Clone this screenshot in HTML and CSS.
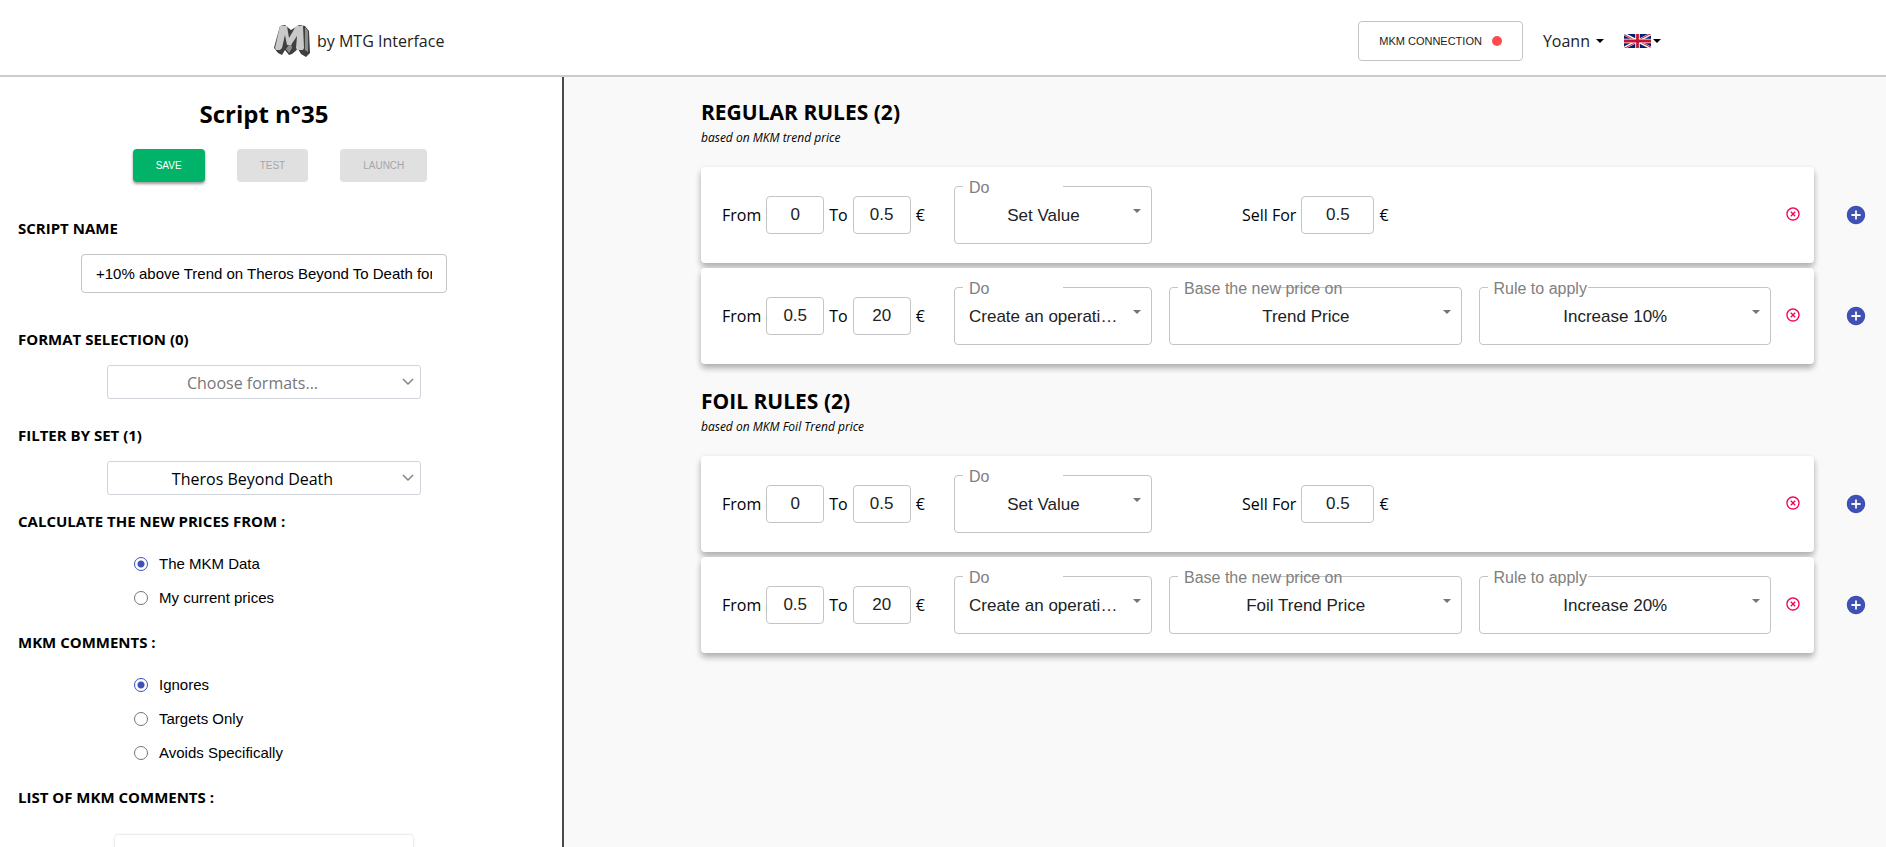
FILE: index.html
```html
<!DOCTYPE html>
<html lang="en">
<head>
<meta charset="utf-8">
<title>Script n°35 - MTG Interface</title>
<link rel="stylesheet" href="styles.css">
</head>
<body>
<svg class="sprite" aria-hidden="true">
  <symbol id="icon-remove" viewBox="0 0 24 24">
    <path fill="currentColor" d="M14.59 8L12 10.59 9.41 8 8 9.41 10.59 12 8 14.59 9.41 16 12 13.41 14.59 16 16 14.59 13.41 12 16 9.41 14.59 8zM12 2C6.47 2 2 6.47 2 12s4.470 10 10 10 10-4.470 10-10S17.530 2 12 2zm0 18c-4.410 0-8-3.590-8-8s3.590-8 8-8 8 3.590 8 8-3.590 8-8 8z"/>
  </symbol>
  <symbol id="icon-add" viewBox="0 0 24 24">
    <path fill="currentColor" d="M12 2C6.480 2 2 6.480 2 12s4.480 10 10 10 10-4.480 10-10S17.520 2 12 2zm5 11h-4v4h-2v-4H7v-2h4V7h2v4h4v2z"/>
  </symbol>
</svg>

<header class="topbar">
  <a class="brand" href="#">
    <svg class="brand-logo" viewBox="0 0 36 32" aria-hidden="true">
      <path fill="#3f3f3f" d="M6 1 11 0 17 5 25 0 31 1 35 6 36 28 32 32 27 29 24 24 18 29 15 30 11 25 8 30 4 28 0 23 1 19z"/>
      <path fill="#8d8d8d" d="M31 2 34 6 34 27 31 25zM12 24 15 28 18 23 17 17z"/>
      <path fill="#c9c9c9" d="M6 1H13L15 13 22 1H29L30 23 29 25H23L22 23 23 11 17 20H13L11 10 8 23 6 25H2L1 23z"/>
    </svg>
    <span>by MTG Interface</span>
  </a>
  <div class="topbar-actions">
    <button class="connection" type="button">MKM CONNECTION <span class="status-dot"></span></button>
    <button class="menu-toggle user-menu" type="button">Yoann <span class="caret"></span></button>
    <button class="menu-toggle language-menu" type="button" aria-label="Language: English">
      <svg class="flag" viewBox="0 0 60 30" preserveAspectRatio="none" aria-hidden="true">
        <clipPath id="flag-clip"><path d="M30 15h30v15zv15H0zH0V0zV0h30z"/></clipPath>
        <path fill="#012169" d="M0 0h60v30H0z"/>
        <path stroke="#fff" stroke-width="6" d="M0 0l60 30M60 0L0 30"/>
        <path stroke="#c8102e" stroke-width="4" clip-path="url(#flag-clip)" d="M0 0l60 30M60 0L0 30"/>
        <path stroke="#fff" stroke-width="10" d="M30 0v30M0 15h60"/>
        <path stroke="#c8102e" stroke-width="6" d="M30 0v30M0 15h60"/>
      </svg>
      <span class="caret"></span>
    </button>
  </div>
</header>

<div class="layout">
  <aside class="sidebar">
    <h1>Script n°35</h1>
    <div class="script-actions">
      <button class="btn btn-save" type="button">SAVE</button>
      <button class="btn" type="button" disabled>TEST</button>
      <button class="btn" type="button" disabled>LAUNCH</button>
    </div>

    <h2 class="spaced"><label for="script-name">SCRIPT NAME</label></h2>
    <input class="script-name" id="script-name" type="text" value="+10% above Trend on Theros Beyond To Death for regular">

    <h2 class="spaced"><label for="formats">FORMAT SELECTION (0)</label></h2>
    <div class="picker">
      <select class="placeholder" id="formats"><option>Choose formats...</option></select>
      <svg viewBox="0 0 12 8" aria-hidden="true"><path d="M1 1l5 5 5-5"/></svg>
    </div>

    <h2 class="picker-title"><label for="sets">FILTER BY SET (1)</label></h2>
    <div class="picker">
      <select id="sets"><option>Theros Beyond Death</option></select>
      <svg viewBox="0 0 12 8" aria-hidden="true"><path d="M1 1l5 5 5-5"/></svg>
    </div>

    <h2 id="price-source">CALCULATE THE NEW PRICES FROM :</h2>
    <div class="choices" role="radiogroup" aria-labelledby="price-source">
      <label><input type="radio" name="source" checked>The MKM Data</label>
      <label><input type="radio" name="source">My current prices</label>
    </div>

    <h2 id="comments">MKM COMMENTS :</h2>
    <div class="choices" role="radiogroup" aria-labelledby="comments">
      <label><input type="radio" name="comments" checked>Ignores</label>
      <label><input type="radio" name="comments">Targets Only</label>
      <label><input type="radio" name="comments">Avoids Specifically</label>
    </div>

    <h2>LIST OF MKM COMMENTS :</h2>
    <div class="comment-list"></div>
  </aside>

  <main class="rules">
    <section>
      <h2>REGULAR RULES (2)</h2>
      <p>based on MKM trend price</p>
      <div class="rule">
        <div class="rule-card">
          <div class="range">
            <label for="r1-from">From</label><input id="r1-from" type="text" value="0">
            <label for="r1-to">To</label><input id="r1-to" type="text" value="0.5"><span>€</span>
          </div>
          <div class="field field-action"><select id="r1-do"><option>Set Value</option></select><label for="r1-do">Do</label></div>
          <div class="sell">
            <label for="r1-sell">Sell For</label><input id="r1-sell" type="text" value="0.5"><span>€</span>
          </div>
          <div class="blank"></div>
          <button class="remove" type="button" aria-label="Remove rule"><svg><use href="#icon-remove"/></svg></button>
        </div>
        <button class="add" type="button" aria-label="Add rule"><svg><use href="#icon-add"/></svg></button>
      </div>
      <div class="rule">
        <div class="rule-card">
          <div class="range">
            <label for="r2-from">From</label><input id="r2-from" type="text" value="0.5">
            <label for="r2-to">To</label><input id="r2-to" type="text" value="20"><span>€</span>
          </div>
          <div class="field field-action"><select id="r2-do"><option>Create an operation based on</option></select><label for="r2-do">Do</label></div>
          <div class="field"><select id="r2-base"><option>Trend Price</option></select><label for="r2-base">Base the new price on</label></div>
          <div class="field"><select id="r2-rule"><option>Increase 10%</option></select><label for="r2-rule">Rule to apply</label></div>
          <button class="remove" type="button" aria-label="Remove rule"><svg><use href="#icon-remove"/></svg></button>
        </div>
        <button class="add" type="button" aria-label="Add rule"><svg><use href="#icon-add"/></svg></button>
      </div>
    </section>

    <section>
      <h2>FOIL RULES (2)</h2>
      <p>based on MKM Foil Trend price</p>
      <div class="rule">
        <div class="rule-card">
          <div class="range">
            <label for="f1-from">From</label><input id="f1-from" type="text" value="0">
            <label for="f1-to">To</label><input id="f1-to" type="text" value="0.5"><span>€</span>
          </div>
          <div class="field field-action"><select id="f1-do"><option>Set Value</option></select><label for="f1-do">Do</label></div>
          <div class="sell">
            <label for="f1-sell">Sell For</label><input id="f1-sell" type="text" value="0.5"><span>€</span>
          </div>
          <div class="blank"></div>
          <button class="remove" type="button" aria-label="Remove rule"><svg><use href="#icon-remove"/></svg></button>
        </div>
        <button class="add" type="button" aria-label="Add rule"><svg><use href="#icon-add"/></svg></button>
      </div>
      <div class="rule">
        <div class="rule-card">
          <div class="range">
            <label for="f2-from">From</label><input id="f2-from" type="text" value="0.5">
            <label for="f2-to">To</label><input id="f2-to" type="text" value="20"><span>€</span>
          </div>
          <div class="field field-action"><select id="f2-do"><option>Create an operation based on</option></select><label for="f2-do">Do</label></div>
          <div class="field"><select id="f2-base"><option>Foil Trend Price</option></select><label for="f2-base">Base the new price on</label></div>
          <div class="field"><select id="f2-rule"><option>Increase 20%</option></select><label for="f2-rule">Rule to apply</label></div>
          <button class="remove" type="button" aria-label="Remove rule"><svg><use href="#icon-remove"/></svg></button>
        </div>
        <button class="add" type="button" aria-label="Add rule"><svg><use href="#icon-add"/></svg></button>
      </div>
    </section>
  </main>
</div>
</body>
</html>
```
FILE: styles.css
```css
:root {
  --ui: "Open Sans", "Noto Sans", sans-serif;
  --control: "Liberation Sans", Arial, sans-serif;
  --line: #c4c4c4;
  --indigo: #3f51b5;
}

* { box-sizing: border-box; }

body {
  margin: 0;
  height: 100vh;
  display: flex;
  flex-direction: column;
  background: #fff;
  color: #000;
  font: 16px/24px var(--ui);
}

h1, h2, p { margin: 0; }
button, input, select { margin: 0; font-family: var(--control); color: inherit; }
button { cursor: pointer; }
.sprite { display: none; }

/* Top bar */
.topbar {
  flex: none;
  display: flex;
  justify-content: space-between;
  align-items: center;
  padding: 21px 225px 14px 274px;
  border-bottom: 2px solid #ccc;
}
.brand {
  display: flex;
  align-items: center;
  gap: 7px;
  color: #222;
  text-decoration: none;
}
.brand-logo { width: 36px; height: 32px; }
.topbar-actions { display: flex; align-items: center; }
.connection {
  display: flex;
  align-items: center;
  gap: 10px;
  height: 40px;
  padding: 0 20px;
  border: 1px solid var(--line);
  border-radius: 4px;
  background: #fff;
  color: #222;
  font-size: 11px;
}
.status-dot { width: 10px; height: 10px; border-radius: 50%; background: #ff4d4d; }
.menu-toggle {
  display: flex;
  align-items: center;
  padding: 0;
  border: 0;
  background: none;
  font: 16px/24px var(--ui);
}
.user-menu { gap: 6px; margin-left: 20px; color: #222; }
.language-menu { gap: 2px; margin-left: 20px; }
.caret {
  border: 4px solid transparent;
  border-top-color: #000;
  border-bottom: 0;
}
.flag { width: 27px; height: 14px; border-radius: 2px; }

/* Layout */
.layout { flex: 1; min-height: 0; display: flex; }

/* Sidebar */
.sidebar {
  flex: none;
  width: 564px;
  padding: 19px 34px 0 18px;
  border-right: 2px solid #4a4a4a;
  display: flex;
  flex-direction: column;
  overflow: hidden auto;
  scrollbar-width: none;
}
.sidebar > * { flex: none; }
.sidebar h1 { text-align: center; font-size: 24px; line-height: 36px; padding-right: 18px; }
.script-actions {
  display: flex;
  justify-content: center;
  gap: 32px;
  margin: 17px 0 0 14px;
}
.btn {
  height: 33px;
  padding: 0 23px;
  border: 0;
  border-radius: 4px;
  background: #e0e0e0;
  color: #a6a6a6;
  font-size: 10px;
}
.btn-save {
  background: #00b368;
  color: #fff;
  box-shadow: 0 2px 3px rgba(0, 0, 0, .4);
}
.sidebar h2 { margin: 14px 0; font-size: 15px; line-height: 24px; }
.sidebar h2.spaced { margin-top: 34px; }
.sidebar h2.picker-title { margin-top: 24px; }
.script-name {
  width: 366px;
  height: 39px;
  margin-left: 63px;
  padding: 0 14px;
  border: 1px solid var(--line);
  border-radius: 4px;
  font-size: 15px;
}
.picker { position: relative; width: 314px; margin-left: 89px; }
.picker select {
  width: 100%;
  height: 34px;
  padding: 2px 31px 0 8px;
  appearance: none;
  border: 1px solid #ced4da;
  border-radius: 3px;
  background: #fff;
  font: 16px/24px var(--ui);
  text-align-last: center;
}
.picker .placeholder { color: #777; }
.picker svg {
  position: absolute;
  top: 13px;
  right: 7px;
  width: 12px;
  height: 8px;
  fill: none;
  stroke: #7c858d;
  stroke-width: 1.5;
  pointer-events: none;
}
.choices { display: flex; flex-direction: column; margin-left: 116px; padding-bottom: 1px; }
.choices label {
  display: flex;
  align-items: center;
  gap: 11px;
  height: 34px;
  font: 15px/20px var(--control);
}
.choices input {
  appearance: none;
  width: 14px;
  height: 14px;
  border: 1px solid #757575;
  border-radius: 50%;
}
.choices input:checked {
  border-color: var(--indigo);
  background: radial-gradient(circle, var(--indigo) 3px, transparent 4px);
}
.comment-list {
  width: 298px;
  height: 200px;
  margin: 12px 0 24px 97px;
  border-radius: 4px;
  box-shadow: 0 0 3px rgba(0, 0, 0, .2);
}

/* Rules */
.rules { flex: 1; min-width: 0; padding: 20px 20px 0 137px; background: #f9f9f9; }
.rules section { margin-bottom: 22px; }
.rules h2 { font-size: 21px; line-height: 31px; }
.rules p { font-size: 12px; line-height: 20px; font-style: italic; margin-bottom: 19px; }
.rule { display: flex; align-items: center; gap: 31px; margin-bottom: 5px; }
.rule-card {
  flex: 1;
  min-width: 0;
  height: 96px;
  display: flex;
  align-items: center;
  gap: 17px;
  padding: 0 14px 0 21px;
  border-radius: 4px;
  background: #fff;
  box-shadow: 0 5px 6px rgba(0, 0, 0, .14), 0 3px 6px rgba(0, 0, 0, .2);
}
.range, .sell { display: flex; align-items: center; gap: 5px; }
.range { flex: none; width: 215px; }
.sell { justify-content: center; }
.range input, .sell input {
  width: 58px;
  height: 38px;
  padding: 0;
  border: 1px solid var(--line);
  border-radius: 4px;
  background: #fff;
  color: #222;
  font-size: 17px;
  text-align: center;
}
.sell input { width: 73px; }
.field, .sell, .blank { flex: 1; min-width: 0; }
.field { position: relative; }
.field-action { flex: 0 1 198px; }
.field select {
  display: block;
  width: 100%;
  height: 58px;
  padding: 0 33px 0 14px;
  appearance: none;
  border: 1px solid var(--line);
  border-radius: 4px;
  background: none;
  color: #222;
  font-size: 17px;
  text-align-last: center;
  text-overflow: ellipsis;
}
/* Notch in the outline, behind the floating label */
.field::before {
  content: "";
  position: absolute;
  top: 0;
  left: 9px;
  width: 100px;
  height: 1px;
  background: #fff;
}
.field::after {
  content: "";
  position: absolute;
  top: 23px;
  right: 11px;
  border: 4px solid transparent;
  border-top-color: #757575;
  border-bottom: 0;
  pointer-events: none;
}
.field label {
  position: absolute;
  top: -8px;
  left: 15px;
  color: #808080;
  font: 16px/20px var(--control);
}
.remove, .add {
  flex: none;
  display: flex;
  padding: 0;
  border: 0;
  background: none;
}
.remove { padding-bottom: 3px; margin-left: -3px; color: #f50057; }
.remove svg { width: 16px; height: 16px; }
.rule-card .remove { margin-right: -1px; }
.add { color: var(--indigo); margin-right: -1px; }
.add svg { width: 22px; height: 22px; }
```
